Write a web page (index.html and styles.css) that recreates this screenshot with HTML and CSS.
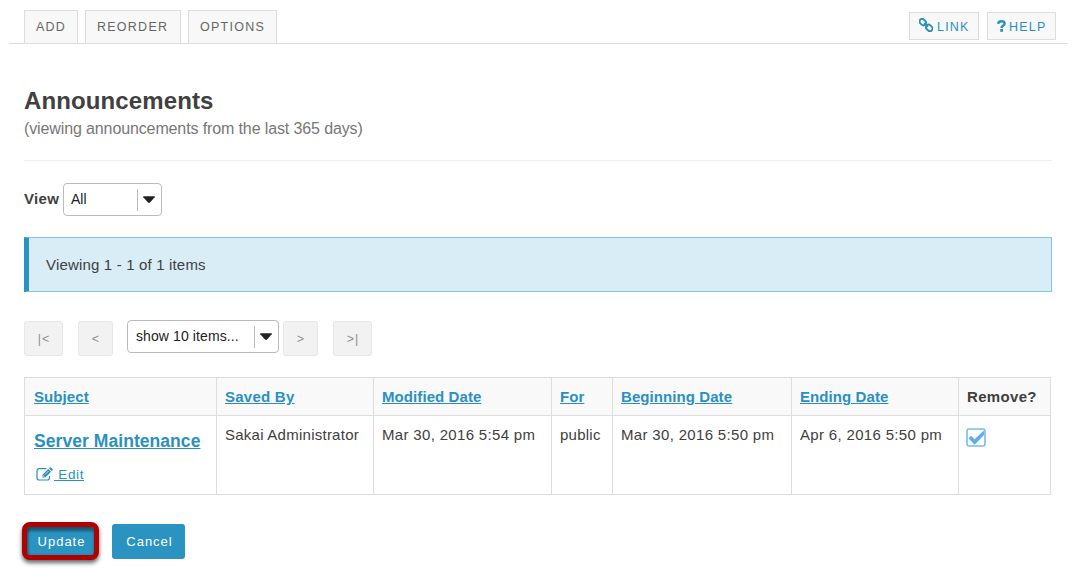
FILE: index.html
```html
<!DOCTYPE html>
<html lang="en">
<head>
<meta charset="utf-8">
<title>Announcements</title>
<link rel="stylesheet" href="styles.css">
</head>
<body>
<nav class="toolbar">
  <div class="tabs">
    <a class="tab tab-add">ADD</a>
    <a class="tab tab-reorder">REORDER</a>
    <a class="tab tab-options">OPTIONS</a>
  </div>
  <div class="tools">
    <a class="tool tool-link"><svg class="chain" viewBox="0 0 14 14"><g transform="rotate(42 7 7)" fill="none" stroke="currentColor" stroke-width="1.900"><rect x="-.8" y="4.400" width="6.800" height="5.200" rx="2.500"/><rect x="8" y="4.400" width="6.800" height="5.200" rx="2.500"/><path d="M4.400 7h5.200"/></g></svg><span>LINK</span></a>
    <a class="tool tool-help"><svg class="question" viewBox="0 0 9 12"><path d="M1.200 3.900C1.300 2.100 2.500 1.200 4.400 1.200c2 0 3.200 1 3.200 2.500C7.600 5.700 4.600 5.500 4.600 7.900" fill="none" stroke="currentColor" stroke-width="2.400"/><path d="M3.200 9h2.800v2.800H3.200z" fill="currentColor"/></svg><span>HELP</span></a>
  </div>
</nav>
<main class="content">
  <header class="heading">
    <h1 class="title">Announcements</h1>
    <p class="subtitle">(viewing announcements from the last 365 days)</p>
  </header>
  <div class="view">
    <label class="view-label">View</label>
    <div class="select select-view"><span>All</span><i class="divider"></i><svg class="caret" viewBox="0 0 12 7"><path d="M.3.300h11.400v1L6.800 6.700H5.200L.3 1.300z"/></svg></div>
  </div>
  <div class="notice">Viewing 1 - 1 of 1 items</div>
  <div class="pager">
    <button class="page first">|&lt;</button>
    <button class="page prev">&lt;</button>
    <div class="select select-size"><span>show 10 items...</span><i class="divider"></i><svg class="caret" viewBox="0 0 12 7"><path d="M.3.300h11.400v1L6.800 6.700H5.200L.3 1.300z"/></svg></div>
    <button class="page next">&gt;</button>
    <button class="page last">&gt;|</button>
  </div>
  <table class="list">
    <colgroup><col class="c-subject"><col class="c-saved"><col class="c-modified"><col class="c-for"><col class="c-begin"><col class="c-end"><col class="c-remove"></colgroup>
    <thead><tr><th><a class="link">Subject</a></th><th><a class="link wide">Saved By</a></th><th><a class="link">Modified Date</a></th><th><a class="link">For</a></th><th><a class="link">Beginning Date</a></th><th><a class="link">Ending Date</a></th><th>Remove?</th></tr></thead>
    <tbody><tr>
      <td>
        <a class="link subject">Server Maintenance</a>
        <div class="edit"><svg class="pencil" viewBox="0 0 18 14"><path d="M10.500 1.600H3.200A2.200 2.200 0 0 0 1 3.800v7A2.200 2.200 0 0 0 3.200 13h8.100a2.200 2.200 0 0 0 2.200-2.200V9" fill="none" stroke="currentColor" stroke-width="1.200"/><path d="M6.500 10.500V7.700L12.300 1.900l2.800 2.800-5.800 5.800zM13 1.200l.8-.8q.6-.5 1.200 0l1.600 1.600q.5.600 0 1.200l-.8.8z" fill="currentColor"/><path d="M7.600 8.500v1h1M9 7.600l3.600-3.600" stroke="#fff" stroke-width=".7" fill="none"/></svg><a class="link edit-link">&nbsp;Edit</a></div>
      </td>
      <td class="saved">Sakai Administrator</td><td>Mar 30, 2016 5:54 pm</td><td class="saved">public</td><td>Mar 30, 2016 5:50 pm</td><td>Apr 6, 2016 5:50 pm</td>
      <td><svg class="check" viewBox="0 0 20 19"><rect x="1" y="1" width="18" height="17" rx="2" fill="#fff" stroke="#74bdec" stroke-width="1.600"/><path d="M2.500 10.200l2.500-2.500 3.500 3.500 9.500-8.700v4.500L8.600 16.800z" fill="#5eaee8"/></svg></td>
    </tr></tbody>
  </table>
  <div class="actions">
    <button class="btn update">Update</button>
    <button class="btn cancel">Cancel</button>
  </div>
</main>
</body>
</html>
```
FILE: styles.css
```css
* { box-sizing: border-box; }
body { margin: 0; min-height: 585px; background: #fff; color: #404040; font: 15px/20px "Liberation Sans", Arial, sans-serif; }
button { margin: 0; font-family: inherit; padding: 0; }

.toolbar { height: 44px; margin: 0 4px 0 9px; padding: 10px 12px 0 15px; border-bottom: 1px solid #ddd; display: flex; justify-content: space-between; }
.tabs { display: flex; gap: 7px; }
.tab { height: 33px; border: 1px solid #ddd; border-bottom: 0; background: #f8f8f8; color: #666; font-size: 12.5px; line-height: 32px; letter-spacing: 1.25px; padding-left: 11px; white-space: nowrap; }
.tab-add { width: 54px; }
.tab-reorder { width: 96px; }
.tab-options { width: 89px; }
.tools { display: flex; gap: 8px; padding-top: 2px; }
.tool { height: 28px; border: 1px solid #ddd; background: #f8f8f8; color: #2a90c0; font-size: 12.5px; line-height: 28px; letter-spacing: 1.2px; display: flex; }
.tool-link { width: 70px; padding-left: 9px; }
.tool-help { width: 69px; padding-left: 9px; }
.chain { width: 14px; height: 14px; margin: 5px 4px 0 0; }
.question { width: 9px; height: 12px; margin: 7px 3px 0 0; }

.content { padding: 43px 20px 0 24px; }
.heading { height: 74px; border-bottom: 1px solid #eee; }
.title { margin: 0; font-size: 24px; line-height: 28px; letter-spacing: .12px; white-space: nowrap; }
.subtitle { margin: 3px 0 0; font-size: 16px; line-height: 22px; letter-spacing: -.12px; color: #777; white-space: nowrap; }

.view { display: flex; margin-top: 22px; height: 33px; }
.view-label { width: 39px; font-weight: bold; line-height: 32px; letter-spacing: .3px; }
.select { height: 33px; border: 1px solid #bbb; border-radius: 4px; background: #fff; color: #222; display: flex; align-items: center; font-size: 14px; line-height: 31px; padding: 0 6px 0 7px; white-space: nowrap; }
.select span { flex: 1; }
.select-view { width: 99px; }
.select-size { width: 152px; padding-left: 8px; margin-right: 4px; letter-spacing: .1px; }
.divider { width: 1px; height: 22px; background: #bbb; margin-right: 5px; }
.caret { width: 12px; height: 7px; fill: #222; }

.notice { height: 55px; margin-top: 21px; border: 1px solid #7fc6e0; border-left: 5px solid #2a93c2; background: #d8edf6; padding-left: 17px; line-height: 54px; letter-spacing: .17px; }

.pager { display: flex; margin-top: 28px; height: 36px; }
.page { height: 35px; margin-top: 1px; border: 1px solid #e6e6e6; border-radius: 3px; background: #f2f2f2; color: #909090; font-size: 12.5px; padding: 0 0 0 1px; letter-spacing: 1px; }
.first, .last { width: 39px; }
.first, .next { margin-right: 15px; }
.prev, .next { width: 35px; }
.prev { margin-right: 14px; }

.list { table-layout: fixed; width: 1027px; margin-top: 21px; border-collapse: separate; border-spacing: 0; border-top: 1px solid #ddd; border-left: 1px solid #ddd; letter-spacing: .33px; }
.c-subject { width: 192px; }
.c-saved { width: 157px; }
.c-modified { width: 178px; }
.c-for { width: 61px; }
.c-begin { width: 179px; }
.c-end { width: 167px; }
.c-remove { width: 92px; }
.list th, .list td { padding: 9px 0 0 8px; border-right: 1px solid #ddd; border-bottom: 1px solid #ddd; text-align: left; vertical-align: top; white-space: nowrap; }
.list th:first-child, .list td:first-child { padding-left: 9px; }
.list th { height: 38px; background: #f9f9f9; }
.list td { height: 79px; }
.list .saved { letter-spacing: .25px; }
.link { color: #2a90c0; text-decoration: underline; }
.list th .link { letter-spacing: .08px; }
.list th .wide { letter-spacing: .25px; }
.subject { display: block; margin-top: 5px; font-size: 17.5px; line-height: 22px; font-weight: bold; letter-spacing: .06px; }
.edit { display: flex; margin: 13px 0 0 2px; font-size: 13.5px; line-height: 20px; color: #2a90c0; }
.edit-link { letter-spacing: .6px; }
.pencil { width: 18px; height: 14px; margin-top: 2px; }
.check { display: block; width: 20px; height: 19px; margin-top: 3px; margin-left: -1px; }

.actions { display: flex; gap: 13px; margin-top: 29px; }
.btn { height: 35px; border: 0; border-radius: 3px; background: #2a93c2; color: #fff; font-size: 13px; letter-spacing: 1px; }
.update { width: 77px; height: 38px; margin: -2px 0 0 -2px; padding-left: 2px; border: 5px solid #b00000; border-radius: 8px; box-shadow: 0 3px 4px rgba(0,0,0,.6), inset 0 4px 3px rgba(0,0,0,.4), inset 2px 0 2px rgba(0,0,0,.2); }
.cancel { width: 73px; padding-left: 2px; }
```
